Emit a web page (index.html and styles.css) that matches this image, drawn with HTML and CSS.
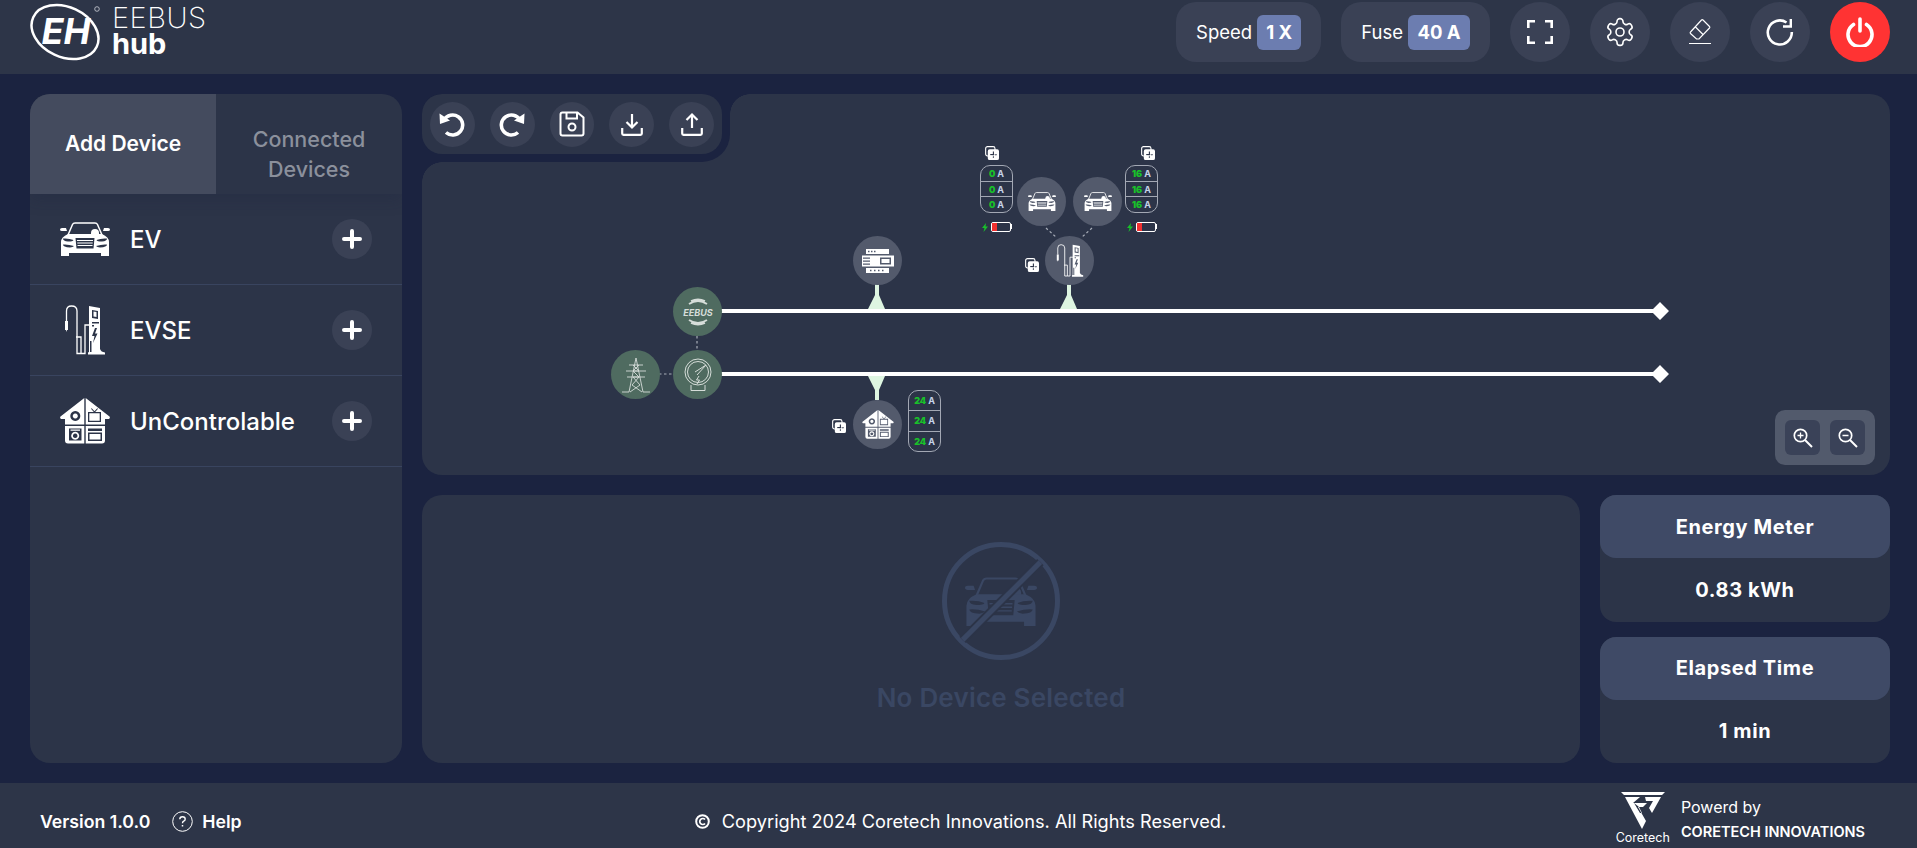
FILE: index.html
```html
<!DOCTYPE html>
<html lang="en">
<head>
  <meta charset="UTF-8" />
  <meta name="viewport" content="width=device-width, initial-scale=1" />
  <title>EEBUS hub</title>
  <link rel="stylesheet" href="styles.css">
</head>
<body>

<svg class="sprites" width="0" height="0">
  <symbol id="car" viewBox="0 0 50 34" fill="currentColor">
    <path fill="none" stroke="currentColor" stroke-width="1.5" d="M8 13 12.500 2.500Q13.200 1 15 1H35Q36.800 1 37.500 2.500L42 13"/>
    <path d="M31 11a4 4 0 0 1 8 0v2h-8z"/>
    <path d="M0 7.500Q0 6 2 6H6L7 9H2Q0 9 0 7.500ZM50 7.500Q50 6 48 6H44L43 9H48Q50 9 50 7.500Z"/>
    <path fill-rule="evenodd" d="M1 20Q1 15 8 12H42Q49 15 49 20V34H41V31H9V34H1ZM3 16.500Q3 19 8 19.500 13 19.500 13.500 18 9 16 3 16.500ZM47 16.500Q47 19 42 19.500 37 19.500 36.500 18 41 16 47 16.500ZM15.500 16 16.500 26.500H33.500L34.500 16ZM3 22.500Q3 25 10 25.500 13 25 14 24 8 22 3 22.500ZM47 22.500Q47 25 40 25.500 37 25 36 24 42 22 47 22.500ZM17 18H33V19H17ZM17.300 20.500H32.700V21.500H17.300ZM17.500 23H32.500V24H17.500Z"/>
  </symbol>
  <symbol id="evse" viewBox="0 0 42 50" fill="currentColor">
    <path fill="none" stroke="currentColor" stroke-width="1.300" d="M2.500 16V6Q2.500 1 7.500 1 13 1 13 6V48.500H17V32H12M17 48.500H21V20H26"/>
    <path d="M1 16H4V25H3L2.500 27 2 25H1Z"/>
    <path fill-rule="evenodd" d="M25 1 36 3V44Q37 47 41 47.500V49.500H24V47.500L25 47ZM28 5V13L34 14V6ZM29.500 6.500 32.500 7V12L29.500 11.500ZM28 17V18.500H35V17ZM31 23 28 31H30.500L29 38 33.500 28.500H31L33 23ZM28 20V21.500H30V20ZM26 36H27.500V47H26Z"/>
  </symbol>
  <symbol id="house" viewBox="0 0 50 46" fill="currentColor">
    <path fill-rule="evenodd" d="M24.300 0V26.500H5V21H1Q-.5 20 .5 18.500ZM15.300 13a5 5 0 1 0 .01 0ZM15.300 15.500a2.500 2.500 0 1 1-.01 0Z"/>
    <path fill-rule="evenodd" d="M25.700 0 49.500 18.500Q50.500 20 49 21H45V26.500H25.700ZM28 14V24H41V14ZM29.300 15.300H39.700V22.700H29.300ZM31 10.800 33.800 14H35.200L38 10.800 37.300 10.200 34.500 13.300 31.700 10.200Z"/>
    <path fill-rule="evenodd" d="M5 28H24.300V45.500H8Q5 45.500 5 42.500ZM9 30.500V42.500H21.500V30.500ZM10.500 31.500H20V32.700H10.500ZM15.200 33.800a4 4 0 1 0 .01 0ZM15.200 35.500a2.300 2.300 0 1 1-.01 0Z"/>
    <path fill-rule="evenodd" d="M25.700 28H45V42.500Q45 45.500 42 45.500H25.700ZM28 30.500V33H42V30.500ZM28 34.500V43H42V34.500ZM29.500 36H40.500V41.500H29.500Z"/>
  </symbol>
  <symbol id="din" viewBox="0 0 32 24" fill="currentColor">
    <path fill-rule="evenodd" d="M4 0H27V5H4ZM6 1.800V3.200H7.500V1.800ZM9 1.800V3.200H10.500V1.800ZM12 1.800V3.200H13.500V1.800ZM0 6.500H32V17.500H0ZM1 8.500V9.800H8V8.500ZM1 11.500V12.800H8V11.500ZM1 14.500V15.800H8V14.500ZM18 8.500V15.500H29V8.500ZM19.500 10H27.500V14H19.500ZM4 19H27V24H4ZM8 20.800V22.200H9.500V20.800ZM12 20.800V22.200H13.500V20.800ZM16 20.800V22.200H17.500V20.800ZM20 20.800V22.200H21.500V20.800Z"/>
  </symbol>
  <symbol id="copy" viewBox="0 0 15 15" fill="currentColor">
    <rect x=".7" y=".7" width="10" height="10" rx="2" fill="none" stroke="currentColor" stroke-width="1.200"/>
    <path fill-rule="evenodd" d="M5 3.500H13Q15 3.500 15 5.500V13Q15 15 13 15H5Q3 15 3 13V5.500Q3 3.500 5 3.500ZM8.400 5.800V8.600H5.600V9.900H8.400V12.700H9.600V9.900H12.400V8.600H9.600V5.800Z"/>
  </symbol>
</svg>

<header class="topbar">
  <div class="brand">
    <svg class="brand-mark" viewBox="0 0 72 60">
      <ellipse cx="35" cy="30" rx="35" ry="25" transform="rotate(25 35 30)" fill="none" stroke="#fff" stroke-width="2.500"/>
      <text x="36" y="42" text-anchor="middle" class="brand-eh">EH</text>
      <circle cx="67" cy="7" r="2.300" fill="none" stroke="#cfd2d9" stroke-width=".8"/>
    </svg>
    <div class="brand-text">
      <div class="brand-top">EEBUS</div>
      <div class="brand-bottom">hub</div>
    </div>
  </div>
  <div class="top-actions">
    <div class="pill">Speed <span class="pill-value speed-value">1 X</span></div>
    <div class="pill">Fuse <span class="pill-value fuse-value">40 A</span></div>
    <button class="round-btn">
      <svg width="26" height="24" viewBox="0 0 26 24" fill="none" stroke="#fff" stroke-width="2.600"><path d="M1.300 8V1.300H8M18 1.300H24.700V8M24.700 16V22.700H18M8 22.700H1.300V16"/></svg>
    </button>
    <button class="round-btn">
      <svg width="32" height="32" viewBox="0 0 24 24" fill="none" stroke="#fff" stroke-width="1.200"><path d="M12.220 2h-.44a2 2 0 0 0-2 2v.18a2 2 0 0 1-1 1.730l-.43.25a2 2 0 0 1-2 0l-.15-.08a2 2 0 0 0-2.730.73l-.22.38a2 2 0 0 0 .73 2.730l.15.1a2 2 0 0 1 1 1.720v.51a2 2 0 0 1-1 1.740l-.15.09a2 2 0 0 0-.73 2.730l.22.38a2 2 0 0 0 2.730.73l.15-.08a2 2 0 0 1 2 0l.43.25a2 2 0 0 1 1 1.730V20a2 2 0 0 0 2 2h.44a2 2 0 0 0 2-2v-.18a2 2 0 0 1 1-1.730l.43-.25a2 2 0 0 1 2 0l.15.08a2 2 0 0 0 2.730-.73l.22-.39a2 2 0 0 0-.73-2.730l-.15-.08a2 2 0 0 1-1-1.740v-.5a2 2 0 0 1 1-1.740l.15-.09a2 2 0 0 0 .73-2.730l-.22-.38a2 2 0 0 0-2.730-.73l-.15.08a2 2 0 0 1-2 0l-.43-.25a2 2 0 0 1-1-1.730V4a2 2 0 0 0-2-2z"/><circle cx="12" cy="12" r="3"/></svg>
    </button>
    <button class="round-btn">
      <svg width="24" height="30" viewBox="0 0 24 30" fill="none" stroke="#fff" stroke-width="1.200"><path d="M15 3 21.500 9.500Q22.200 10.200 21.500 11L11 22H8.500L2.500 16.500Q1.800 15.700 2.500 15L13.500 3Q14.300 2.300 15 3ZM7.500 10 15.500 18M1 26.500H23"/></svg>
    </button>
    <button class="round-btn">
      <svg width="28" height="28" viewBox="0 0 28 28" fill="none" stroke="#fff" stroke-width="2.600"><path d="M20.500 4.500A12 12 0 1 0 25.800 14"/><path d="M24.800 1V8.500H17" stroke-width="2.400"/></svg>
    </button>
    <button class="round-btn power-btn">
      <svg width="30" height="30" viewBox="0 0 30 30" fill="none" stroke="#fff" stroke-width="3.600" stroke-linecap="round"><path d="M8.500 7.500A12 12 0 1 0 21.500 7.500"/><path d="M15 2V14"/></svg>
    </button>
  </div>
</header>

<main class="layout">
  <aside class="side-panel">
    <div class="tabs">
      <div class="tab active">Add Device</div>
      <div class="tab muted">Connected Devices</div>
    </div>
    <div class="device-row">
      <svg class="device-icon car-icon"><use href="#car"/></svg>
      <span class="device-name">EV</span>
      <button class="add-btn"><svg width="20" height="20" viewBox="0 0 20 20" stroke="#fff" stroke-width="4" stroke-linecap="round"><path d="M10 2V18M2 10H18"/></svg></button>
    </div>
    <div class="device-row">
      <svg class="device-icon evse-icon"><use href="#evse"/></svg>
      <span class="device-name">EVSE</span>
      <button class="add-btn"><svg width="20" height="20" viewBox="0 0 20 20" stroke="#fff" stroke-width="4" stroke-linecap="round"><path d="M10 2V18M2 10H18"/></svg></button>
    </div>
    <div class="device-row">
      <svg class="device-icon house-icon"><use href="#house"/></svg>
      <span class="device-name">UnControlable</span>
      <button class="add-btn"><svg width="20" height="20" viewBox="0 0 20 20" stroke="#fff" stroke-width="4" stroke-linecap="round"><path d="M10 2V18M2 10H18"/></svg></button>
    </div>
  </aside>

  <section class="canvas">
    <svg class="wires">
      <path d="M299 217H1238M299 280H1238" stroke="#fff" stroke-width="4"/>
      <path d="M1238 208 1247 217 1238 226 1229 217ZM1238 271 1247 280 1238 289 1229 280Z" fill="#fff"/>
      <path d="M453 190H457V201L463 215H446L453 201ZM645 190H649V201L655 215H638L645 201ZM453 306H457V296L463 282H446L453 296Z" fill="#def5e1"/>
      <path d="M275 242V256M237 280H251M624 134 635 144M670 134 659 144" stroke="#a8adb8" stroke-width="1.200" stroke-dasharray="2.500 2.500"/>
    </svg>

    <div class="node grid-node n-eebus">
      <svg width="36" height="34" viewBox="0 0 36 34" fill="none" stroke="#d6ddd9" stroke-width="1.800">
        <path d="M9 9Q18 3 27 9M11 6Q18 3 25 6M9 25Q18 31 27 25M11 28Q18 31 25 28"/>
        <text x="18" y="21" text-anchor="middle" class="eebus-word">EEBUS</text>
      </svg>
    </div>
    <div class="node grid-node n-meter">
      <svg width="30" height="34" viewBox="0 0 30 34" fill="none" stroke="#d6ddd9" stroke-width="1">
        <circle cx="15" cy="14" r="13"/><circle cx="15" cy="14" r="10.500"/>
        <path d="M12 14 23 7 14 17M8 27V32.500H22V27M16 18 13.500 22H16.500L14 26"/>
      </svg>
    </div>
    <div class="node grid-node n-tower">
      <svg width="30" height="36" viewBox="0 0 30 36" fill="none" stroke="#d6ddd9" stroke-width=".9">
        <path d="M15 1 8 35H1M15 1 22 35H29M8 8H22M5 14H25M6 20H24M12 8 18 14 12 14 18 20 12 20 19 28 9 35M18 8 12 14M18 20 11 28 21 35"/>
      </svg>
    </div>
    <div class="node n-din"><svg class="din-icon"><use href="#din"/></svg></div>
    <div class="node n-house"><svg class="node-house-icon"><use href="#house"/></svg></div>
    <div class="node n-evse"><svg class="node-evse-icon"><use href="#evse"/></svg></div>
    <div class="node n-car1"><svg class="node-car-icon"><use href="#car"/></svg></div>
    <div class="node n-car2"><svg class="node-car-icon"><use href="#car"/></svg></div>

    <div class="amps amps-car1"><span><b>0</b> A</span><span><b>0</b> A</span><span><b>0</b> A</span></div>
    <div class="amps amps-car2"><span><b>16</b> A</span><span><b>16</b> A</span><span><b>16</b> A</span></div>
    <div class="amps amps-house"><span><b>24</b> A</span><span><b>24</b> A</span><span><b>24</b> A</span></div>

    <svg class="copy-icon copy-car1"><use href="#copy"/></svg>
    <svg class="copy-icon copy-car2"><use href="#copy"/></svg>
    <svg class="copy-icon copy-evse"><use href="#copy"/></svg>
    <svg class="copy-icon copy-house"><use href="#copy"/></svg>

    <div class="charge charge-car1">
      <svg width="6" height="9" viewBox="0 0 6 9" fill="#19c02a"><path d="M4 0 0 5H2.500L1.500 9 6 3.500H3.500Z"/></svg>
      <span class="battery"><i></i></span>
    </div>
    <div class="charge charge-car2">
      <svg width="6" height="9" viewBox="0 0 6 9" fill="#19c02a"><path d="M4 0 0 5H2.500L1.500 9 6 3.500H3.500Z"/></svg>
      <span class="battery"><i></i></span>
    </div>

    <div class="toolbar-notch">
      <div class="toolbar">
        <button class="tool-btn">
          <svg width="26" height="26" viewBox="0 0 26 26" fill="none" stroke="#fff" stroke-width="3.600"><path d="M5 9A10 10 0 1 1 7 21.500"/><path d="M.5 2.500 11 9.500 1 13Z" fill="#fff" stroke="none"/></svg>
        </button>
        <button class="tool-btn">
          <svg width="26" height="26" viewBox="0 0 26 26" fill="none" stroke="#fff" stroke-width="3.600"><path d="M21 9A10 10 0 1 0 19 21.500"/><path d="M25.500 2.500 15 9.500 25 13Z" fill="#fff" stroke="none"/></svg>
        </button>
        <button class="tool-btn">
          <svg width="26" height="26" viewBox="0 0 26 26" fill="none" stroke="#fff" stroke-width="2"><path d="M1.500 3.500Q1.500 1.500 3.500 1.500H18.500L24.500 6.500V22.500Q24.500 24.500 22.500 24.500H3.500Q1.500 24.500 1.500 22.500Z"/><path d="M7.500 1.500V7.500H18V1.500"/><circle cx="13" cy="16" r="3.500"/></svg>
        </button>
        <button class="tool-btn">
          <svg width="22" height="24" viewBox="0 0 22 24" fill="none" stroke="#fff" stroke-width="2.200"><path d="M11 2V15M5.500 10 11 15.500 16.500 10M1.200 16V21.500Q1.200 22.800 2.500 22.800H19.500Q20.800 22.800 20.800 21.500V16"/></svg>
        </button>
        <button class="tool-btn">
          <svg width="22" height="24" viewBox="0 0 22 24" fill="none" stroke="#fff" stroke-width="2.200"><path d="M11 16V3M5.500 8 11 2.500 16.500 8M1.200 16V21.500Q1.200 22.800 2.500 22.800H19.500Q20.800 22.800 20.800 21.500V16"/></svg>
        </button>
      </div>
    </div>

    <div class="zoom-box">
      <button class="zoom-btn">
        <svg width="20" height="20" viewBox="0 0 20 20" fill="none" stroke="#fff" stroke-width="1.700"><circle cx="7.500" cy="7.500" r="6.200"/><path d="M12 12 19 19" stroke-width="2"/><path d="M7.500 4.500V10.500M4.500 7.500H10.500" stroke-width="1.300"/></svg>
      </button>
      <button class="zoom-btn">
        <svg width="20" height="20" viewBox="0 0 20 20" fill="none" stroke="#fff" stroke-width="1.700"><circle cx="7.500" cy="7.500" r="6.200"/><path d="M12 12 19 19" stroke-width="2"/><path d="M4.500 7.500H10.500" stroke-width="1.300"/></svg>
      </button>
    </div>
  </section>

  <section class="details">
    <div class="empty-mark">
      <svg class="empty-car"><use href="#car"/></svg>
      <span class="empty-slash"></span>
    </div>
    <div class="empty-text">No Device Selected</div>
  </section>

  <aside class="stats">
    <div class="stat-card">
      <div class="stat-title">Energy Meter</div>
      <div class="stat-value">0.83 kWh</div>
    </div>
    <div class="stat-card">
      <div class="stat-title">Elapsed Time</div>
      <div class="stat-value">1 min</div>
    </div>
  </aside>
</main>

<footer class="bottombar">
  <div class="foot-left">
    <span class="version">Version 1.0.0</span>
    <span class="help">
      <svg width="21" height="21" viewBox="0 0 21 21" fill="none" stroke="#fff" stroke-width="1"><circle cx="10.500" cy="10.500" r="9.800"/><path d="M7.800 8.300Q7.800 5.800 10.500 5.800 13.200 5.800 13.200 8 13.200 9.500 11.700 10.200 10.500 10.800 10.500 12.300" stroke-width="1.400"/><path d="M10.500 14V15.500" stroke-width="1.500"/></svg>
      Help
    </span>
  </div>
  <div class="copyright">
    <svg width="15" height="15" viewBox="0 0 15 15" fill="none" stroke="#fff" stroke-width="2"><circle cx="7.500" cy="7.500" r="6.300"/><path d="M10 5.500A3 3 0 1 0 10 9.500" stroke-width="1.700"/></svg>
    Copyright 2024 Coretech Innovations. All Rights Reserved.
  </div>
  <div class="foot-right">
    <div class="ct-logo">
      <svg width="44" height="37" viewBox="0 0 44 37">
        <path fill="#fff" fill-rule="evenodd" d="M0 0H44L41 3H3ZM4 5H19L12 11H26L22 15H17L25 29 21 37ZM24 5H40L31 21 28 16 32 9H25ZM18 15 21 21 19 21 13 11Z"/>
      </svg>
      <span class="ct-word">Coretech</span>
    </div>
    <div class="ct-text">
      <div class="ct-powered">Powerd by</div>
      <div class="ct-name">CORETECH INNOVATIONS</div>
    </div>
  </div>
</footer>

</body>
</html>
```

FILE: styles.css
```css
* {
  box-sizing: border-box;
}
body {
  font-family: Inter, "Open Sans", "Liberation Sans", sans-serif;
  margin: 0;
  height: 848px;
  overflow: hidden;
  background: #1b2340;
  color: white;
  display: flex;
  flex-direction: column;
}
button {
  border: none;
  padding: 0;
  cursor: pointer;
  display: flex;
  align-items: center;
  justify-content: center;
}
svg {
  display: block;
}
.sprites {
  position: absolute;
}

/* top bar */
.topbar {
  height: 74px;
  flex: none;
  background: #2d3548;
  display: flex;
  justify-content: space-between;
  padding: 2px 27px 12px 30px;
}
.brand {
  display: flex;
  gap: 10px;
}
.brand-mark {
  width: 72px;
  height: 60px;
}
.brand-eh {
  font-size: 36px;
  font-weight: 700;
  font-style: italic;
  fill: #fff;
}
.brand-text {
  line-height: 26px;
  font-size: 29px;
  padding-top: 3px;
}
.brand-top {
  font-weight: 200;
  letter-spacing: 0.5px;
}
.brand-bottom {
  font-weight: 700;
}
.top-actions {
  display: flex;
  gap: 20px;
}
.pill {
  height: 60px;
  background: #3a4155;
  border-radius: 20px;
  display: flex;
  align-items: center;
  gap: 5px;
  padding: 0 20px;
  font-size: 18.500px;
}
.pill-value {
  background: #6c7db0;
  border-radius: 6px;
  height: 35px;
  display: flex;
  align-items: center;
  justify-content: center;
  font-weight: 700;
}
.speed-value {
  width: 44px;
}
.fuse-value {
  width: 62px;
}
.round-btn {
  width: 60px;
  height: 60px;
  border-radius: 50%;
  background: #3a4155;
}
.power-btn {
  background: #ff3333;
}

/* page grid */
.layout {
  flex: 1;
  display: grid;
  grid-template-columns: 372px 1158px 290px;
  grid-template-rows: 381px 268px;
  column-gap: 20px;
  row-gap: 20px;
  padding: 20px 27px 20px 30px;
}
.side-panel {
  grid-row: 1 / 3;
  background: #2c3448;
  border-radius: 20px;
  overflow: hidden;
}
.tabs {
  display: flex;
  height: 100px;
  box-shadow: 0 6px 14px rgba(27, 35, 64, 0.25);
  position: relative;
}
.tab {
  flex: 0 0 50%;
  display: flex;
  align-items: center;
  justify-content: center;
  text-align: center;
  font-size: 21.500px;
  font-weight: 500;
  line-height: 30px;
}
.tab.active {
  background: #444b5e;
  font-size: 21px;
  font-weight: 600;
}
.tab.muted {
  color: #8b909c;
  padding: 20px 30px 0;
}
.device-row {
  height: 91px;
  display: flex;
  align-items: center;
  padding: 0 30px;
  border-bottom: 1px solid #39445f;
}
.device-icon {
  flex: none;
}
.car-icon {
  width: 50px;
  height: 34px;
  margin-right: 20px;
}
.evse-icon {
  width: 42px;
  height: 50px;
  margin: 0 24px 0 4px;
}
.house-icon {
  width: 50px;
  height: 46px;
  margin-right: 20px;
}
.device-name {
  flex: 1;
  font-size: 24px;
  font-weight: 500;
}
.add-btn {
  width: 40px;
  height: 40px;
  border-radius: 50%;
  background: #3a4155;
}

/* single line diagram */
.canvas {
  grid-column: 2 / 4;
  position: relative;
  background: #2c3448;
  border-radius: 20px;
  overflow: hidden;
}
.wires {
  position: absolute;
  left: 0;
  top: 0;
  width: 100%;
  height: 100%;
  fill: none;
}
.node {
  position: absolute;
  width: 49px;
  height: 49px;
  border-radius: 50%;
  background: #535a6c;
  display: flex;
  align-items: center;
  justify-content: center;
}
.grid-node {
  background: #4f6b60;
}
.eebus-word {
  font-size: 9px;
  font-weight: 700;
  font-style: italic;
  fill: #d6ddd9;
  stroke: none;
}
.n-eebus { left: 251px; top: 193px; }
.n-meter { left: 251px; top: 256px; }
.n-tower { left: 189px; top: 256px; }
.n-din { left: 431px; top: 142px; }
.n-house { left: 431px; top: 306px; }
.n-evse { left: 623px; top: 142px; }
.n-car1 { left: 595px; top: 83px; }
.n-car2 { left: 651px; top: 83px; }
.din-icon {
  width: 32px;
  height: 24px;
}
.node-house-icon {
  width: 32px;
  height: 29px;
}
.node-evse-icon {
  width: 28px;
  height: 33px;
}
.node-car-icon {
  width: 28px;
  height: 19px;
}
.amps {
  position: absolute;
  width: 33px;
  display: flex;
  flex-direction: column;
  border: 1px solid #a3a8b4;
  border-radius: 10px;
  overflow: hidden;
  font-size: 9px;
  font-weight: 700;
  color: #c5d3e8;
  text-align: center;
}
.amps span {
  flex: 1;
  display: flex;
  align-items: center;
  justify-content: center;
  gap: 2px;
  border-bottom: 1px solid #a3a8b4;
}
.amps span:last-child {
  border-bottom: none;
}
.amps b {
  color: #19c02a;
}
.amps-car1 { left: 558px; top: 71px; height: 48px; }
.amps-car2 { left: 703px; top: 71px; height: 48px; }
.amps-house { left: 486px; top: 296px; height: 62px; }
.copy-icon {
  position: absolute;
  width: 14px;
  height: 14px;
  color: white;
}
.copy-car1 { left: 563px; top: 52px; }
.copy-car2 { left: 719px; top: 52px; }
.copy-evse { left: 603px; top: 164px; }
.copy-house { left: 410px; top: 325px; }
.charge {
  position: absolute;
  top: 128px;
  display: flex;
  align-items: center;
  gap: 3px;
}
.charge-car1 { left: 560px; }
.charge-car2 { left: 705px; }
.battery {
  position: relative;
  display: block;
  width: 20px;
  height: 10px;
  border: 1.500px solid white;
  border-radius: 2px;
  background: #2c3448;
}
.battery::after {
  content: "";
  position: absolute;
  left: 100%;
  top: 1px;
  width: 2px;
  height: 5px;
  background: white;
}
.battery i {
  display: block;
  width: 5px;
  height: 100%;
  background: #f03030;
}

.toolbar-notch {
  position: absolute;
  left: 0;
  top: 0;
  background: #1b2340;
  padding: 0 8px 8px 0;
  border-bottom-right-radius: 28px;
}
.toolbar-notch::before,
.toolbar-notch::after {
  content: "";
  position: absolute;
  width: 20px;
  height: 20px;
  background: radial-gradient(circle at 100% 100%, transparent 19.500px, #1b2340 20px);
}
.toolbar-notch::before {
  left: 100%;
  top: 0;
}
.toolbar-notch::after {
  left: 0;
  top: 100%;
}
.toolbar {
  width: 300px;
  height: 60px;
  background: #2c3448;
  border-radius: 20px;
  display: flex;
  align-items: center;
  gap: 15px;
  padding: 0 8px;
}
.tool-btn {
  width: 45px;
  height: 45px;
  border-radius: 50%;
  background: #3a4155;
}
.zoom-box {
  position: absolute;
  right: 15px;
  bottom: 10px;
  width: 100px;
  height: 55px;
  background: #525a6c;
  border-radius: 10px;
  display: flex;
  align-items: center;
  justify-content: center;
  gap: 10px;
}
.zoom-btn {
  width: 35px;
  height: 35px;
  border-radius: 6px;
  background: #3a4258;
}

/* selected device */
.details {
  background: #2c3448;
  border-radius: 20px;
  display: flex;
  flex-direction: column;
  align-items: center;
  padding-top: 47px;
}
.empty-mark {
  position: relative;
  width: 118px;
  height: 118px;
  border: 5px solid #3a4763;
  border-radius: 50%;
  display: flex;
  align-items: center;
  justify-content: center;
  color: #3a4763;
}
.empty-car {
  width: 72px;
  height: 49px;
}
.empty-slash {
  position: absolute;
  left: 50%;
  top: -1px;
  width: 5px;
  height: 110px;
  margin-left: -2.500px;
  background: #3a4763;
  box-shadow: 2px 0 0 #2c3448, -2px 0 0 #2c3448;
  transform: rotate(45deg);
}
.empty-text {
  margin-top: 22px;
  font-size: 26px;
  font-weight: 600;
  color: #3a4763;
  letter-spacing: 0.2px;
}

/* meter cards */
.stats {
  display: flex;
  flex-direction: column;
  gap: 15px;
}
.stat-card {
  flex: 1;
  background: #2c3448;
  border-radius: 16px;
  font-size: 20px;
  font-weight: 700;
  letter-spacing: 0.6px;
  text-align: center;
  display: flex;
  flex-direction: column;
}
.stat-title {
  height: 63px;
  background: #3f4a66;
  border-radius: 16px;
  display: flex;
  align-items: center;
  justify-content: center;
}
.stat-value {
  flex: 1;
  display: flex;
  align-items: center;
  justify-content: center;
}

/* footer */
.bottombar {
  height: 65px;
  flex: none;
  background: #2d3548;
  display: grid;
  grid-template-columns: 1fr auto 1fr;
  align-items: center;
  padding: 0 52px 0 40px;
}
.foot-left {
  display: flex;
  align-items: center;
  gap: 22px;
  font-size: 17.700px;
  font-weight: 600;
  margin-top: 11px;
}
.help {
  display: flex;
  align-items: center;
  gap: 9px;
}
.copyright {
  display: flex;
  align-items: center;
  gap: 12px;
  font-size: 18.200px;
  margin: 11px 0 0 16px;
}
.foot-right {
  display: flex;
  justify-content: flex-end;
  align-items: center;
  gap: 11px;
}
.ct-logo {
  display: flex;
  flex-direction: column;
  align-items: center;
  margin-top: 5px;
}
.ct-word {
  font-size: 12.500px;
  margin-top: 1px;
}
.ct-text {
  margin-top: 6px;
}
.ct-powered {
  font-size: 16px;
  margin-bottom: 6px;
}
.ct-name {
  font-size: 14.500px;
  font-weight: 600;
}
```
